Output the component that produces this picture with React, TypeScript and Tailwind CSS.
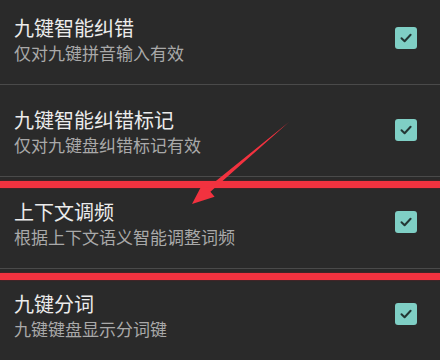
import React from "react";

const items = [
  { title: "九键智能纠错", desc: "仅对九键拼音输入有效" },
  { title: "九键智能纠错标记", desc: "仅对九键盘纠错标记有效" },
  { title: "上下文调频", desc: "根据上下文语义智能调整词频" },
  { title: "九键分词", desc: "九键键盘显示分词键" },
];

const CheckBox = (): JSX.Element => (
  <div className="flex h-[22px] w-[22px] items-center justify-center rounded-[3px] bg-[#7fcfc5]">
    <svg width="14" height="14" viewBox="0 0 14 14" fill="none">
      <path
        d="M2.5 7.2 L5.6 10.2 L11.6 3.8"
        stroke="#233634"
        strokeWidth="2"
        strokeLinecap="round"
        strokeLinejoin="round"
      />
    </svg>
  </div>
);

const Row = ({ title, desc }: { title: string; desc: string }): JSX.Element => (
  <div>
    <div className="flex h-[91px] items-start justify-between pl-[14px] pr-[23px]">
      <div className="flex flex-col pt-[22px]">
        <p className="text-[20px] leading-[26px] text-[#ececec]">{title}</p>
        <p className="text-[17px] leading-[24px] text-[#a9a9a9]">{desc}</p>
      </div>
      <div className="pt-[34px]">
        <CheckBox />
      </div>
    </div>
    <div className="h-px bg-[#4a4a4a]" />
  </div>
);

export default function App(): JSX.Element {
  return (
    <div
      className="relative h-[360px] w-[440px] overflow-hidden bg-[#2a2a2a]"
      style={{ fontFamily: '"Noto Sans CJK SC", "Noto Sans", sans-serif' }}
    >
      <div className="-mt-[7px] flex flex-col">
        {items.map((item) => (
          <Row key={item.title} title={item.title} desc={item.desc} />
        ))}
      </div>

      {/* red annotation marks */}
      <div className="absolute left-0 top-[181px] h-[7px] w-full bg-[#f2323f] shadow-[0_0_2px_#7a1a22]" />
      <div className="absolute left-0 top-[273px] h-[7px] w-full bg-[#f2323f] shadow-[0_0_2px_#7a1a22]" />
      <svg className="absolute left-0 top-0" width="440" height="360" viewBox="0 0 440 360">
        <polygon
          points="289,122 210.4,191.7 214.6,196.7 192,204 203,182.9 207.2,187.9"
          fill="#f2323f"
        />
      </svg>
    </div>
  );
}
